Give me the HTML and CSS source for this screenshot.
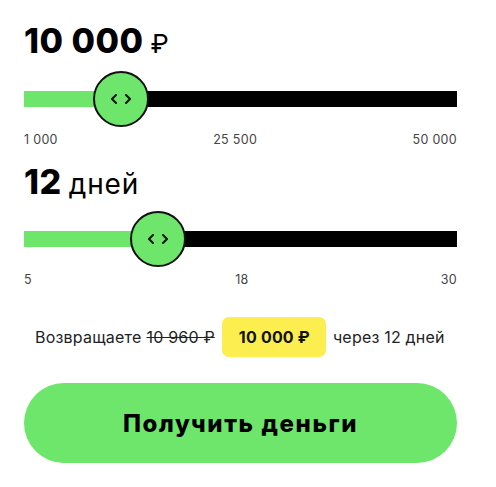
FILE: index.html
```html
<!DOCTYPE html>
<html lang="ru">
<head>
<meta charset="utf-8">
<link rel="stylesheet" href="styles.css">
</head>
<body>
<div class="calc">
  <section class="field">
    <h2 class="value"><b>10 000</b> <span class="unit">₽</span></h2>
    <div class="slider">
      <div class="track">
        <div class="fill" style="width: 22.4%"></div>
      </div>
      <div class="thumb" style="left: 69px">
        <svg width="20" height="10" viewBox="0 0 20 10"><path d="M5 1 L1 5 L5 9 M15 1 L19 5 L15 9" fill="none" stroke="#111" stroke-width="2" stroke-linecap="round" stroke-linejoin="round"/></svg>
      </div>
    </div>
    <div class="scale"><span>1 000</span><span class="mid">25 500</span><span>50 000</span></div>
  </section>
  <section class="field second">
    <h2 class="value"><b>12</b> <span class="unit days">дней</span></h2>
    <div class="slider">
      <div class="track">
        <div class="fill" style="width: 30.7%"></div>
      </div>
      <div class="thumb" style="left: 106px">
        <svg width="20" height="10" viewBox="0 0 20 10"><path d="M5 1 L1 5 L5 9 M15 1 L19 5 L15 9" fill="none" stroke="#111" stroke-width="2" stroke-linecap="round" stroke-linejoin="round"/></svg>
      </div>
    </div>
    <div class="scale"><span>5</span><span class="mid two">18</span><span>30</span></div>
  </section>
  <p class="summary">Возвращаете <s>10 960 ₽</s> <span class="badge">10 000 ₽</span> через 12 дней</p>
  <button class="cta">Получить деньги</button>
</div>
</body>
</html>
```
FILE: styles.css
```css
* { box-sizing: border-box; }
html, body { margin: 0; padding: 0; background: #fff; }
body { font-family: "Inter", "Noto Sans", sans-serif; color: #000; }
.calc { width: 496px; padding: 20px 39px 0 24px; }
.field { display: flex; flex-direction: column; }
.value { margin: 0; font-size: 34px; line-height: 42px; font-weight: 400; letter-spacing: 0.5px; word-spacing: -3px; }
.value b { font-weight: 800; word-spacing: 0; }
.unit { font-size: 26px; font-weight: 400; }
.days { font-size: 28px; letter-spacing: 0.8px; }
.slider { position: relative; height: 56px; margin-top: 6px; display: flex; align-items: center; }
.track { width: 100%; height: 16px; background: #000; display: flex; }
.fill { height: 100%; background: #6de66b; }
.thumb { position: absolute; top: 0; width: 56px; height: 56px; border-radius: 50%; background: #6de66b; border: 2px solid #111; display: flex; align-items: center; justify-content: center; }
.scale { display: flex; justify-content: space-between; font-size: 12.5px; color: #444; margin-top: 5px; line-height: 16px; letter-spacing: 0.3px; }
.scale .mid.two { margin-left: 11px; }
.second { margin-top: 13px; }
.summary { margin: 29px 0 0 11px; font-size: 16px; letter-spacing: 0.2px; color: #222; display: flex; align-items: center; gap: 5px; white-space: nowrap; }
.summary s { color: #222; }
.badge { background: #fcee4e; border-radius: 7px; padding: 0 16px 0 17px; height: 40px; display: inline-flex; align-items: center; font-weight: 700; margin: 0 2px; color: #111; }
.cta { margin-top: 26px; width: 433px; height: 80px; border: none; border-radius: 40px; background: #6de66b; font-family: inherit; font-size: 24px; font-weight: 800; color: #000; letter-spacing: 1.6px; }
```
